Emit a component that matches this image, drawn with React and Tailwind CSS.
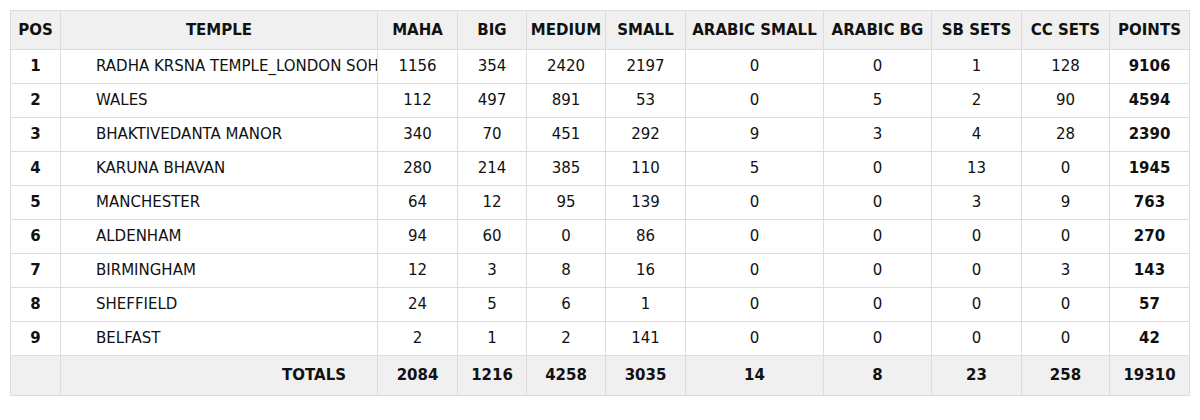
import React from 'react';

const rows = [
    { pos: 1, temple: 'RADHA KRSNA TEMPLE_LONDON SOHO', maha: 1156, big: 354, medium: 2420, small: 2197, arSmall: 0, arBg: 0, sb: 1, cc: 128, points: 9106 },
    { pos: 2, temple: 'WALES', maha: 112, big: 497, medium: 891, small: 53, arSmall: 0, arBg: 5, sb: 2, cc: 90, points: 4594 },
    { pos: 3, temple: 'BHAKTIVEDANTA MANOR', maha: 340, big: 70, medium: 451, small: 292, arSmall: 9, arBg: 3, sb: 4, cc: 28, points: 2390 },
    { pos: 4, temple: 'KARUNA BHAVAN', maha: 280, big: 214, medium: 385, small: 110, arSmall: 5, arBg: 0, sb: 13, cc: 0, points: 1945 },
    { pos: 5, temple: 'MANCHESTER', maha: 64, big: 12, medium: 95, small: 139, arSmall: 0, arBg: 0, sb: 3, cc: 9, points: 763 },
    { pos: 6, temple: 'ALDENHAM', maha: 94, big: 60, medium: 0, small: 86, arSmall: 0, arBg: 0, sb: 0, cc: 0, points: 270 },
    { pos: 7, temple: 'BIRMINGHAM', maha: 12, big: 3, medium: 8, small: 16, arSmall: 0, arBg: 0, sb: 0, cc: 3, points: 143 },
    { pos: 8, temple: 'SHEFFIELD', maha: 24, big: 5, medium: 6, small: 1, arSmall: 0, arBg: 0, sb: 0, cc: 0, points: 57 },
    { pos: 9, temple: 'BELFAST', maha: 2, big: 1, medium: 2, small: 141, arSmall: 0, arBg: 0, sb: 0, cc: 0, points: 42 },
];

const totals = ['2084', '1216', '4258', '3035', '14', '8', '23', '258', '19310'];

const headers = ['MAHA', 'BIG', 'MEDIUM', 'SMALL', 'ARABIC SMALL', 'ARABIC BG', 'SB SETS', 'CC SETS', 'POINTS'];
const widths = ['w-[80px]', 'w-[69px]', 'w-[79px]', 'w-[80px]', 'w-[138px]', 'w-[108px]', 'w-[90px]', 'w-[88px]', 'w-[80px]'];

const cell = 'border border-[#dddddd] text-center whitespace-nowrap';

export default function App() {
    return (
        <div className="min-h-screen bg-white p-[10px] text-[15px] text-[#111111]" style={{ fontFamily: '"DejaVu Sans", Verdana, sans-serif' }}>
            <table className="table-fixed border-collapse w-[1179px]">
                <colgroup>
                    <col className="w-[50px]" />
                    <col className="w-[317px]" />
                    {widths.map((w, i) => (
                        <col key={i} className={w} />
                    ))}
                </colgroup>
                <thead>
                    <tr className="h-[39px] bg-[#f0f0f0]">
                        <th className={`${cell} font-bold`}>POS</th>
                        <th className={`${cell} font-bold`}>TEMPLE</th>
                        {headers.map((h) => (
                            <th key={h} className={`${cell} font-bold`}>{h}</th>
                        ))}
                    </tr>
                </thead>
                <tbody>
                    {rows.map((r) => (
                        <tr key={r.pos} className="h-[34px]">
                            <td className={`${cell} font-bold`}>{r.pos}</td>
                            <td className="border border-[#dddddd] text-left pl-[35px] whitespace-nowrap overflow-hidden">{r.temple}</td>
                            <td className={cell}>{r.maha}</td>
                            <td className={cell}>{r.big}</td>
                            <td className={cell}>{r.medium}</td>
                            <td className={cell}>{r.small}</td>
                            <td className={cell}>{r.arSmall}</td>
                            <td className={cell}>{r.arBg}</td>
                            <td className={cell}>{r.sb}</td>
                            <td className={cell}>{r.cc}</td>
                            <td className={`${cell} font-bold`}>{r.points}</td>
                        </tr>
                    ))}
                    <tr className="h-[40px] bg-[#f0f0f0] font-bold">
                        <td className={cell}></td>
                        <td className="border border-[#dddddd] text-right pr-[31px]">TOTALS</td>
                        {totals.map((t, i) => (
                            <td key={i} className={cell}>{t}</td>
                        ))}
                    </tr>
                </tbody>
            </table>
        </div>
    );
}
